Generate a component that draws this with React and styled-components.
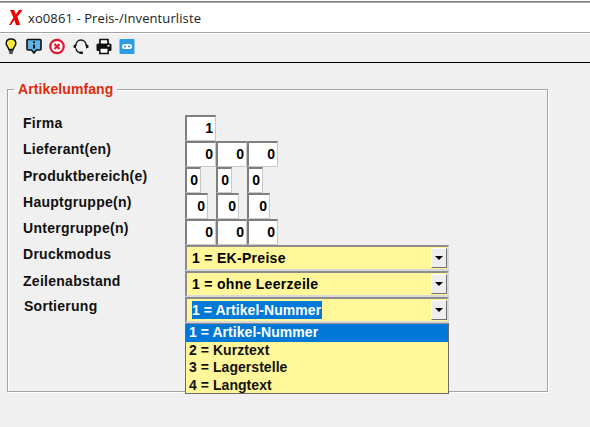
import React from "react";
import styled, { createGlobalStyle } from "styled-components";

const Global = createGlobalStyle`
  html, body { margin: 0; padding: 0; background: #f0f0f0; }
  * { box-sizing: border-box; }
`;
const Page = styled.div`
  width: 590px; height: 427px; overflow: hidden; background: #f0f0f0;
  font-family: "Liberation Sans", Arial, sans-serif; color: #000;
`;
const TitleBar = styled.header`
  height: 33px; background: #fff; border-top: 1px solid #fff; border-bottom: 1px solid #a2a2a2;
  box-shadow: inset 0 1px 0 #808080, inset 0 2px 0 #a8a8a8;
  display: flex; align-items: center; gap: 5px; padding: 2px 0 0 9px;
`;
const Title = styled.span`
  font-family: "Open Sans", "Noto Sans", sans-serif; font-size: 13px; color: #222; letter-spacing: .1px;
`;
const Toolbar = styled.nav`
  height: 30px; border-top: 1px solid #fff; border-bottom: 1px solid #000;
  display: flex; align-items: center; gap: 7.4px; padding: 0 0 3px 2.5px;
`;
const Icon = styled.svg`
  width: 16px; height: 17px; display: block; flex: none;
`;
const Group = styled.fieldset`
  margin: 18px 0 0 7px; width: 541px; height: 311px; padding: 18px 0 0 15px;
  border: 1px solid #a4a4a4; box-shadow: inset 1px 1px 0 #fff, 1px 1px 0 #fff; min-width: 0;
`;
const Legend = styled.legend`
  margin-left: -9px; padding: 0 4px; font-size: 14px; line-height: 16px; font-weight: bold; color: #e02a0a;
  letter-spacing: .1px;
`;
const Form = styled.div`
  display: grid; grid-template-columns: 162px 264px; grid-auto-rows: 26px;
`;
const Label = styled.div`
  font-size: 14px; font-weight: bold; line-height: 16px; letter-spacing: .27px; color: #111;
  padding: ${p => p.$top ?? 1}px 0 0 ${p => p.$shift || 0}px;
`;
const Cells = styled.div`
  display: flex; position: relative;
`;
const Slot = styled.div`
  width: 31px; flex: none;
`;
const Field = styled.div`
  width: ${p => p.$w}px; height: 26px; background: #fff;
  border: 2px solid #7e7e7e; border-right: 1px solid #c8c8c8; border-bottom: 1px solid #c8c8c8;
  font-size: 14px; font-weight: bold; line-height: 22px; text-align: right; padding-right: 2px;
`;
const Select = styled.div`
  width: 264px; height: 26px; background: #fff799; display: flex; align-items: stretch;
  border: 2px solid #8c8c8c; border-right-color: #d8d8d8; border-bottom-color: #d8d8d8;
  font-size: 14px; font-weight: bold; line-height: 20px;
`;
const Value = styled.div`
  flex: 1; padding: 1px 0 0 5px; letter-spacing: .3px;
`;
const Mark = styled.span`
  display: inline-block; background: #0078d7; color: #fff; height: 18px; line-height: 18px; padding-right: 1px;
  letter-spacing: .05px;
`;
const Arrow = styled.div`
  width: 16px; flex: none; background: #eeeeee;
  border: 1px solid; border-color: #fff #707070 #707070 #fff;
  display: flex; align-items: center; justify-content: center; margin: 1px 0;
  &::before { content: ""; border: 4px solid transparent; border-top: 4px solid #000; border-bottom: 0; }
`;
const List = styled.ul`
  position: absolute; left: 0; top: 26px; z-index: 2; width: 264px; height: 71px; margin: 0; padding: 0;
  list-style: none; background: #fff799; border: 1px solid #6a6a6a; border-top-color: #8c8c8c;
`;
const Item = styled.li`
  height: 17.5px; line-height: 17.5px; padding-left: 3px; font-size: 14px; font-weight: bold; letter-spacing: .05px;
  background: ${p => (p.$active ? "#0078d7" : "transparent")};
  color: ${p => (p.$active ? "#fff" : "#111")};
`;

const Logo = () => (
  <Icon viewBox="0 0 14 15" style={{ width: 14, height: 15 }}>
    <path fill="#f00000" d="M1 0h4.2l1.6 4.2L10 0h3.6L8.4 6.8 11.2 15H7L5.4 10 1.8 15H0l4.4-7.4z" />
  </Icon>
);
const Bulb = () => (
  <Icon viewBox="0 0 16 17">
    <path fill="#ffe93a" stroke="#111" strokeWidth="1.5" d="M8 1C5 1 3.2 3 3.2 5.4c0 2.6 2.2 3.6 2.6 6.1h4.4c.4-2.5 2.6-3.500 2.6-6.100C12.800 3 11 1 8 1z" />
    <path stroke="#111" strokeWidth="1.6" d="M5.8 13h4.4M6.3 15h3.4" />
  </Icon>
);
const Info = () => (
  <Icon viewBox="0 0 16 17">
    <path fill="#5fb4e6" stroke="#111" strokeWidth="1.6" d="M2 1.500h12a1 1 0 0 1 1 1V11a1 1 0 0 1-1 1h-3.500L8 15l-2.500-3H2a1 1 0 0 1-1-1V2.500a1 1 0 0 1 1-1z" />
    <path stroke="#111" strokeWidth="2" d="M8 3.500v1.500M8 6.500v4" />
  </Icon>
);
const Stop = () => (
  <Icon viewBox="0 0 16 17">
    <circle cx="8" cy="8.500" r="6.700" fill="#fff" stroke="#e3162e" strokeWidth="2.200" />
    <path stroke="#e3162e" strokeWidth="2.200" d="M5.500 6l5 5M10.500 6l-5 5" />
  </Icon>
);
const Headset = () => (
  <Icon viewBox="0 0 16 17">
    <path fill="none" stroke="#111" strokeWidth="1.500" d="M2.800 8C2.800 4.500 5 2 8 2s5.200 2.500 5.200 6" />
    <path fill="#111" d="M0.500 7.500L3 6v4.500L.5 9.500zM15.500 7.500L13 6v4.500l2.500-1z" />
    <path fill="none" stroke="#111" strokeWidth="1.500" d="M3 10.500c.5 3 2 4 4.500 4.200" />
    <rect x="6.500" y="13.500" width="3.500" height="2.500" rx="1" fill="#111" />
  </Icon>
);
const Printer = () => (
  <Icon viewBox="0 0 16 17">
    <path fill="#fff" stroke="#111" strokeWidth="1.700" d="M4 6V1.500h8V6" />
    <rect x="0.500" y="5.500" width="15" height="7.500" rx="1.500" fill="#111" />
    <rect x="11.500" y="7" width="2" height="1.500" fill="#fff" />
    <path fill="#fff" stroke="#111" strokeWidth="1.500" d="M3.800 10h8.400v5.500H3.800z" />
  </Icon>
);
const Remote = () => (
  <Icon viewBox="0 0 16 17">
    <rect x="0.500" y="1" width="15" height="15" rx="1" fill="#2f9be8" />
    <rect x="3" y="6" width="10" height="5" rx="2.500" fill="#fff" />
    <circle cx="6" cy="8.500" r="1.100" fill="#2f9be8" />
    <circle cx="10" cy="8.500" r="1.100" fill="#2f9be8" />
  </Icon>
);

const numberRows = [
  { label: "Firma", values: ["1"], w: 31, top: 0 },
  { label: "Lieferant(en)", values: ["0", "0", "0"], w: 31, top: 0 },
  { label: "Produktbereich(e)", values: ["0", "0", "0"], w: 16 },
  { label: "Hauptgruppe(n)", values: ["0", "0", "0"], w: 23 },
  { label: "Untergruppe(n)", values: ["0", "0", "0"], w: 31 },
];
const options = ["1 = Artikel-Nummer", "2 = Kurztext", "3 = Lagerstelle", "4 = Langtext"];

export default function App() {
  return (
    <Page>
      <Global />
      <TitleBar>
        <Logo />
        <Title>xo0861 - Preis-/Inventurliste</Title>
      </TitleBar>
      <Toolbar>
        <Bulb /><Info /><Stop /><Headset /><Printer /><Remote />
      </Toolbar>
      <Group>
        <Legend>Artikelumfang</Legend>
        <Form>
          {numberRows.map(r => (
            <React.Fragment key={r.label}>
              <Label $top={r.top}>{r.label}</Label>
              <Cells>
                {r.values.map((v, i) => (
                  <Slot key={i}><Field $w={r.w}>{v}</Field></Slot>
                ))}
              </Cells>
            </React.Fragment>
          ))}
          <Label>Druckmodus</Label>
          <Cells><Select><Value>1 = EK-Preise</Value><Arrow /></Select></Cells>
          <Label $top={2}>Zeilenabstand</Label>
          <Cells><Select><Value>1 = ohne Leerzeile</Value><Arrow /></Select></Cells>
          <Label $shift={1}>Sortierung</Label>
          <Cells>
            <Select><Value><Mark>1 = Artikel-Nummer</Mark></Value><Arrow /></Select>
            <List>
              {options.map((o, i) => <Item key={o} $active={i === 0}>{o}</Item>)}
            </List>
          </Cells>
        </Form>
      </Group>
    </Page>
  );
}
